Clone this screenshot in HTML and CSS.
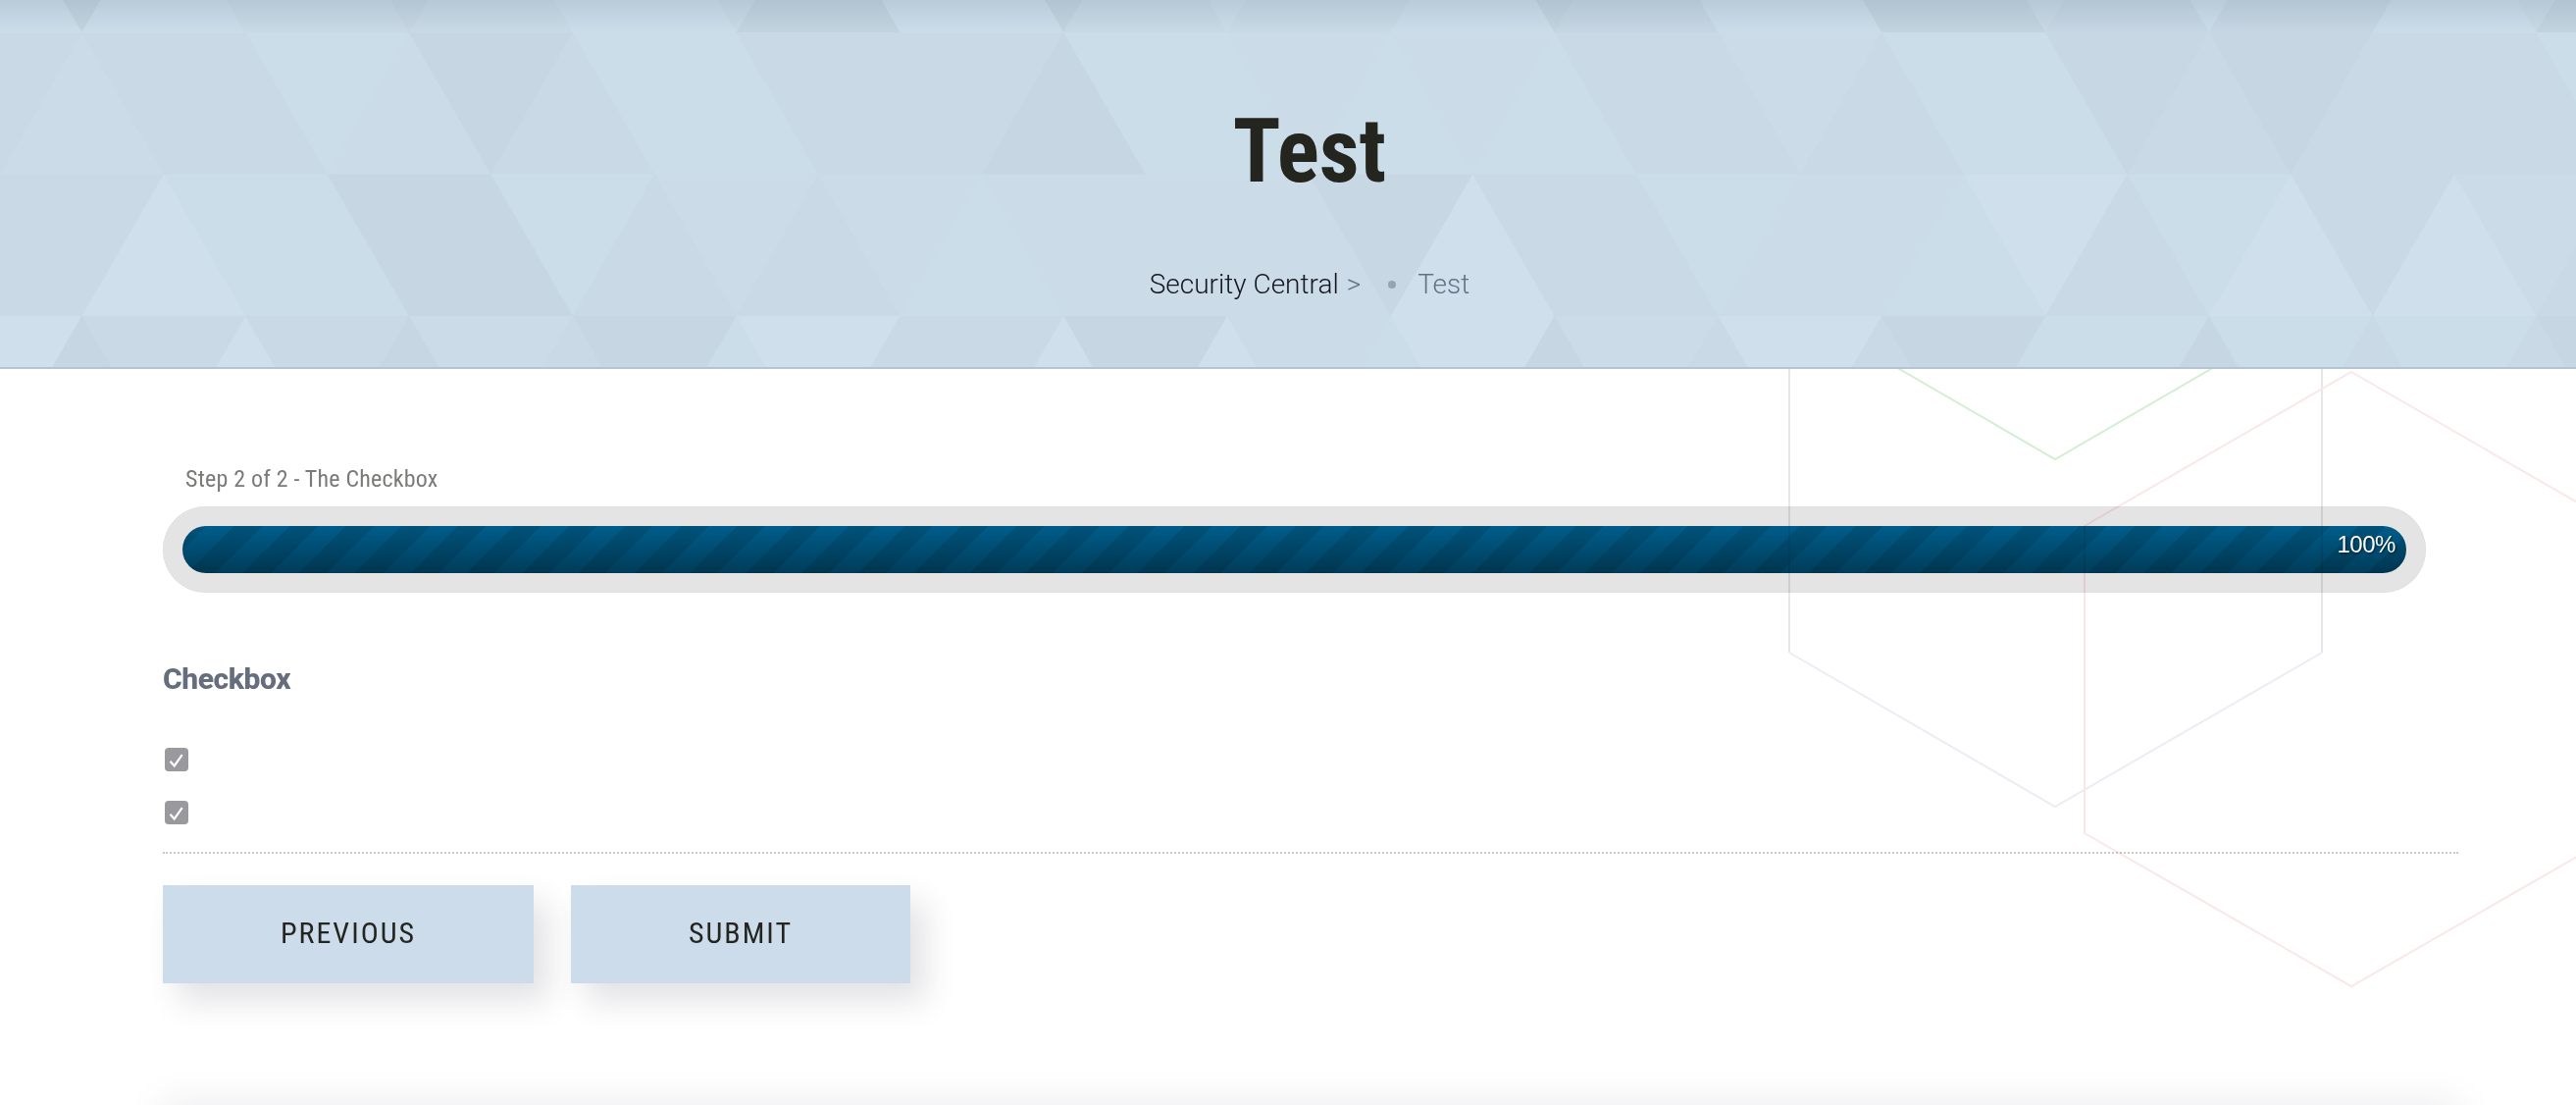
FILE: index.html
```html
<!DOCTYPE html>
<html lang="en">
<head>
<meta charset="utf-8">
<title>Test</title>
<link rel="stylesheet" href="styles.css">
</head>
<body>
<div class="page">
  <header class="hero">
    <svg class="hero-bg" viewBox="0 0.7716 31.487 2.588" preserveAspectRatio="none" aria-hidden="true">
      <path class="t-a" d="M1 3l1-1 1 1zM17 3l1-1 1 1zM27 3l1-1 1 1zM29 3l1-1 1 1zM24 2h2l-1 1zM2 4l1-1 1 1zM12 4l1-1 1 1zM14 4l1-1 1 1zM-1 3h2l-1 1zM9 3h2l-1 1zM17 3h2l-1 1zM21 3h2l-1 1z"/>
      <path class="t-b" d="M-1 1l1-1 1 1zM1 1l1-1 1 1zM7 1l1-1 1 1zM11 1l1-1 1 1zM17 1l1-1 1 1zM21 1l1-1 1 1zM29 1l1-1 1 1zM6 0h2l-1 1zM10 0h2l-1 1zM14 0h2l-1 1zM20 0h2l-1 1zM26 0h2l-1 1zM8 2l1-1 1 1zM14 2l1-1 1 1zM16 2l1-1 1 1zM18 2l1-1 1 1zM24 2l1-1 1 1zM3 1h2l-1 1zM7 1h2l-1 1zM13 1h2l-1 1zM23 1h2l-1 1zM31 1h2l-1 1zM3 3l1-1 1 1zM11 3l1-1 1 1zM23 3l1-1 1 1zM2 2h2l-1 1zM6 2h2l-1 1zM20 2h2l-1 1zM26 2h2l-1 1zM8 4l1-1 1 1zM16 4l1-1 1 1zM24 4l1-1 1 1zM25 3h2l-1 1zM27 3h2l-1 1zM29 3h2l-1 1z"/>
      <path class="t-m" d="M0 2l1-1 1 1zM4 2l1-1 1 1zM15 1h2l-1 1zM17 1h2l-1 1zM21 1h2l-1 1zM13 3l1-1 1 1zM15 3l1-1 1 1zM21 3l1-1 1 1zM8 2h2l-1 1zM10 2h2l-1 1zM12 2h2l-1 1zM14 2h2l-1 1zM22 2h2l-1 1zM30 2h2l-1 1zM5 3h2l-1 1zM15 3h2l-1 1zM19 3h2l-1 1z"/>
      <path class="t-c" d="M3 1l1-1 1 1zM5 1l1-1 1 1zM13 1l1-1 1 1zM15 1l1-1 1 1zM2 0h2l-1 1zM8 0h2l-1 1zM16 0h2l-1 1zM24 0h2l-1 1zM30 0h2l-1 1zM2 2l1-1 1 1zM6 2l1-1 1 1zM10 2l1-1 1 1zM20 2l1-1 1 1zM22 2l1-1 1 1zM26 2l1-1 1 1zM28 2l1-1 1 1zM30 2l1-1 1 1zM-1 1h2l-1 1zM1 1h2l-1 1zM9 1h2l-1 1zM11 1h2l-1 1zM19 1h2l-1 1zM29 1h2l-1 1zM-1 3l1-1 1 1zM7 3l1-1 1 1zM9 3l1-1 1 1zM19 3l1-1 1 1zM25 3l1-1 1 1zM31 3l1-1 1 1zM0 2h2l-1 1zM18 2h2l-1 1zM28 2h2l-1 1zM6 4l1-1 1 1zM10 4l1-1 1 1zM20 4l1-1 1 1zM22 4l1-1 1 1zM28 4l1-1 1 1zM30 4l1-1 1 1zM1 3h2l-1 1zM3 3h2l-1 1zM11 3h2l-1 1z"/>
      <path class="t-d" d="M25 1h2l-1 1zM16 2h2l-1 1z"/>
      <path class="t-e" d="M19 1l1-1 1 1zM25 1l1-1 1 1zM27 1l1-1 1 1zM4 0h2l-1 1zM28 0h2l-1 1zM12 2l1-1 1 1zM5 1h2l-1 1zM27 1h2l-1 1zM5 3l1-1 1 1zM4 2h2l-1 1zM0 4l1-1 1 1zM4 4l1-1 1 1zM18 4l1-1 1 1zM26 4l1-1 1 1zM7 3h2l-1 1zM13 3h2l-1 1zM23 3h2l-1 1zM31 3h2l-1 1z"/>
      <path class="t-x" d="M9 1l1-1 1 1zM23 1l1-1 1 1zM31 1l1-1 1 1zM0 0h2l-1 1zM12 0h2l-1 1zM18 0h2l-1 1zM22 0h2l-1 1z"/>
    </svg>
    <div class="hero-shade"></div>
    <div class="hero-content">
      <h1 class="hero-title"><span class="narrow">Test</span></h1>
      <nav class="crumbs">
        <a class="crumb-link">Security Central</a>
        <span class="crumb-sep">&gt;</span>
        <span class="crumb-dot"></span>
        <span class="crumb-current">Test</span>
      </nav>
    </div>
  </header>

  <main class="content">
    <svg class="hexes" viewBox="0 376 2626 750" aria-hidden="true">
      <polyline class="hex-green" points="1824,311 2095,468 2366,311"/>
      <path class="hex-grey-side" d="M1824 352V665M2367 352V665"/>
      <polyline class="hex-grey-low" points="1824,665 2095,822 2367,665"/>
      <polygon class="hex-pink" points="2397,379 2669,536 2669,849 2397,1005 2125,849 2125,536"/>
    </svg>

    <div class="step-label"><span class="narrow">Step 2 of 2 - The Checkbox</span></div>
    <div class="progress">
      <div class="progress-bar"><span class="progress-value">100%</span></div>
    </div>

    <h3 class="field-title">Checkbox</h3>
    <div class="checks">
      <span class="check"><svg viewBox="0 0 24 24"><path d="M5.5 13.8l4.2 4.6 8-11.2"/></svg></span>
      <span class="check"><svg viewBox="0 0 24 24"><path d="M5.5 13.8l4.2 4.6 8-11.2"/></svg></span>
    </div>

    <div class="actions">
      <button class="btn btn-prev" type="button"><span class="narrow">PREVIOUS</span></button>
      <button class="btn btn-submit" type="button"><span class="narrow">SUBMIT</span></button>
    </div>

    <div class="next-card"></div>
  </main>
</div>
</body>
</html>
```

FILE: styles.css
```css
* { box-sizing: border-box; }
html, body { margin: 0; padding: 0; background: #fff; }
body { font-family: Roboto, "Liberation Sans", sans-serif; color: #222; }
.page { height: 1126px; overflow: hidden; }

.narrow { display: inline-block; font-stretch: 75%; }

.hero {
  position: relative;
  height: 376px;
  background: #cadbe8;
  border-bottom: 2px solid #b4c4d4;
  z-index: 2;
}
.hero-bg { position: absolute; left: 0; top: 0; width: 2626px; height: 374px; display: block; }
.t-a { fill: #cfe0ec; }
.t-b { fill: #ccddea; }
.t-m { fill: #cbdbe8; }
.t-c { fill: #c9dae6; }
.t-d { fill: #c7d7e4; }
.t-e { fill: #c6d6e3; }
.t-x { fill: #c3d4e0; }
.hero-shade {
  position: absolute; left: 0; top: 0; right: 0; height: 33px;
  background: linear-gradient(rgba(70, 90, 115, .14), rgba(70, 90, 115, 0));
}
.hero-content {
  position: relative;
  display: flex; flex-direction: column; align-items: center;
  padding: 110px 0 0 44px;
}
.hero-title {
  margin: 0; font-size: 90px; line-height: 90px; font-weight: 700; color: #252520;
}
.crumbs {
  margin-top: 76px; display: flex; align-items: center;
  font-size: 28px; line-height: 28px; font-weight: 300;
}
.crumb-link { color: #14161f; }
.crumb-sep { color: #667282; margin-left: 8px; }
.crumb-dot { width: 8px; height: 8px; border-radius: 50%; background: #95a3b2; margin: 0 22px 0 28px; }
.crumb-current { color: #647183; }

.content { position: relative; height: 750px; padding: 97px 120px 0 166px; }
.hexes {
  position: absolute; left: 0; top: 0; width: 2626px; height: 750px;
  pointer-events: none; z-index: 1; mix-blend-mode: multiply;
}
.hexes polyline, .hexes polygon, .hexes path { fill: none; stroke-width: 2; }
.hex-green { stroke: #d3efd3; }
.hex-grey-side { stroke: #e7e7ea; }
.hex-grey-low { stroke: #ececf4; }
.hex-pink { stroke: #fbe6e8; }

.step-label { padding-left: 23px; font-size: 24px; line-height: 30px; color: #7a7a78; letter-spacing: .2px; }

.progress {
  margin-top: 13px; width: 2307px; height: 88px; padding: 20px;
  border-radius: 44px; background: #e4e4e4;
  box-shadow: inset 0 0 1px rgba(0, 0, 0, .14);
}
.progress-bar {
  height: 48px; border-radius: 24px;
  display: flex; align-items: center; justify-content: flex-end;
  padding: 0 11px 10px 0;
  background:
    repeating-linear-gradient(135deg,
      rgba(0, 0, 0, .11) 0, rgba(0, 0, 0, .11) 17px,
      rgba(0, 0, 0, 0) 17px, rgba(0, 0, 0, 0) 37.1px,
      rgba(0, 0, 0, .11) 37.1px, rgba(0, 0, 0, .11) 40.3px),
    linear-gradient(#005d8b, #003c59);
}
.progress-value {
  font-family: "Liberation Sans", Arial, sans-serif;
  font-size: 24px; line-height: 24px; letter-spacing: -.45px; color: #fff;
  text-shadow: 1px 1px 2px rgba(0, 0, 0, .6);
}

.field-title {
  margin: 73px 0 0; font-size: 30px; line-height: 30px; font-weight: 800;
  color: #666d7d; letter-spacing: -.4px;
}
.checks { margin: 55px 0 0 2px; display: flex; flex-direction: column; gap: 30px; }
.check { display: block; width: 24px; height: 24px; border-radius: 4px; background: #9a9a9e; }
.check svg { display: block; width: 24px; height: 24px; }
.check path { fill: none; stroke: #fff; stroke-width: 2.2; }

.actions {
  margin-top: 28px; padding-top: 32px;
  border-top: 2px dotted #c8c8c8;
  display: flex; gap: 38px;
}
.btn {
  height: 100px; border: 0; border-radius: 0; padding: 0 0 3px;
  background: #ccdcea; color: #252520;
  font-family: Roboto, "Liberation Sans", sans-serif;
  font-size: 30px; letter-spacing: 2px;
  box-shadow: 15px 18px 30px rgba(50, 50, 70, .14);
}
.btn-prev { width: 378px; }
.btn-submit { width: 346px; }

.next-card {
  margin-top: 124px; height: 120px; background: #fff;
  box-shadow: 0 0 40px rgba(40, 40, 70, .1);
}
```
